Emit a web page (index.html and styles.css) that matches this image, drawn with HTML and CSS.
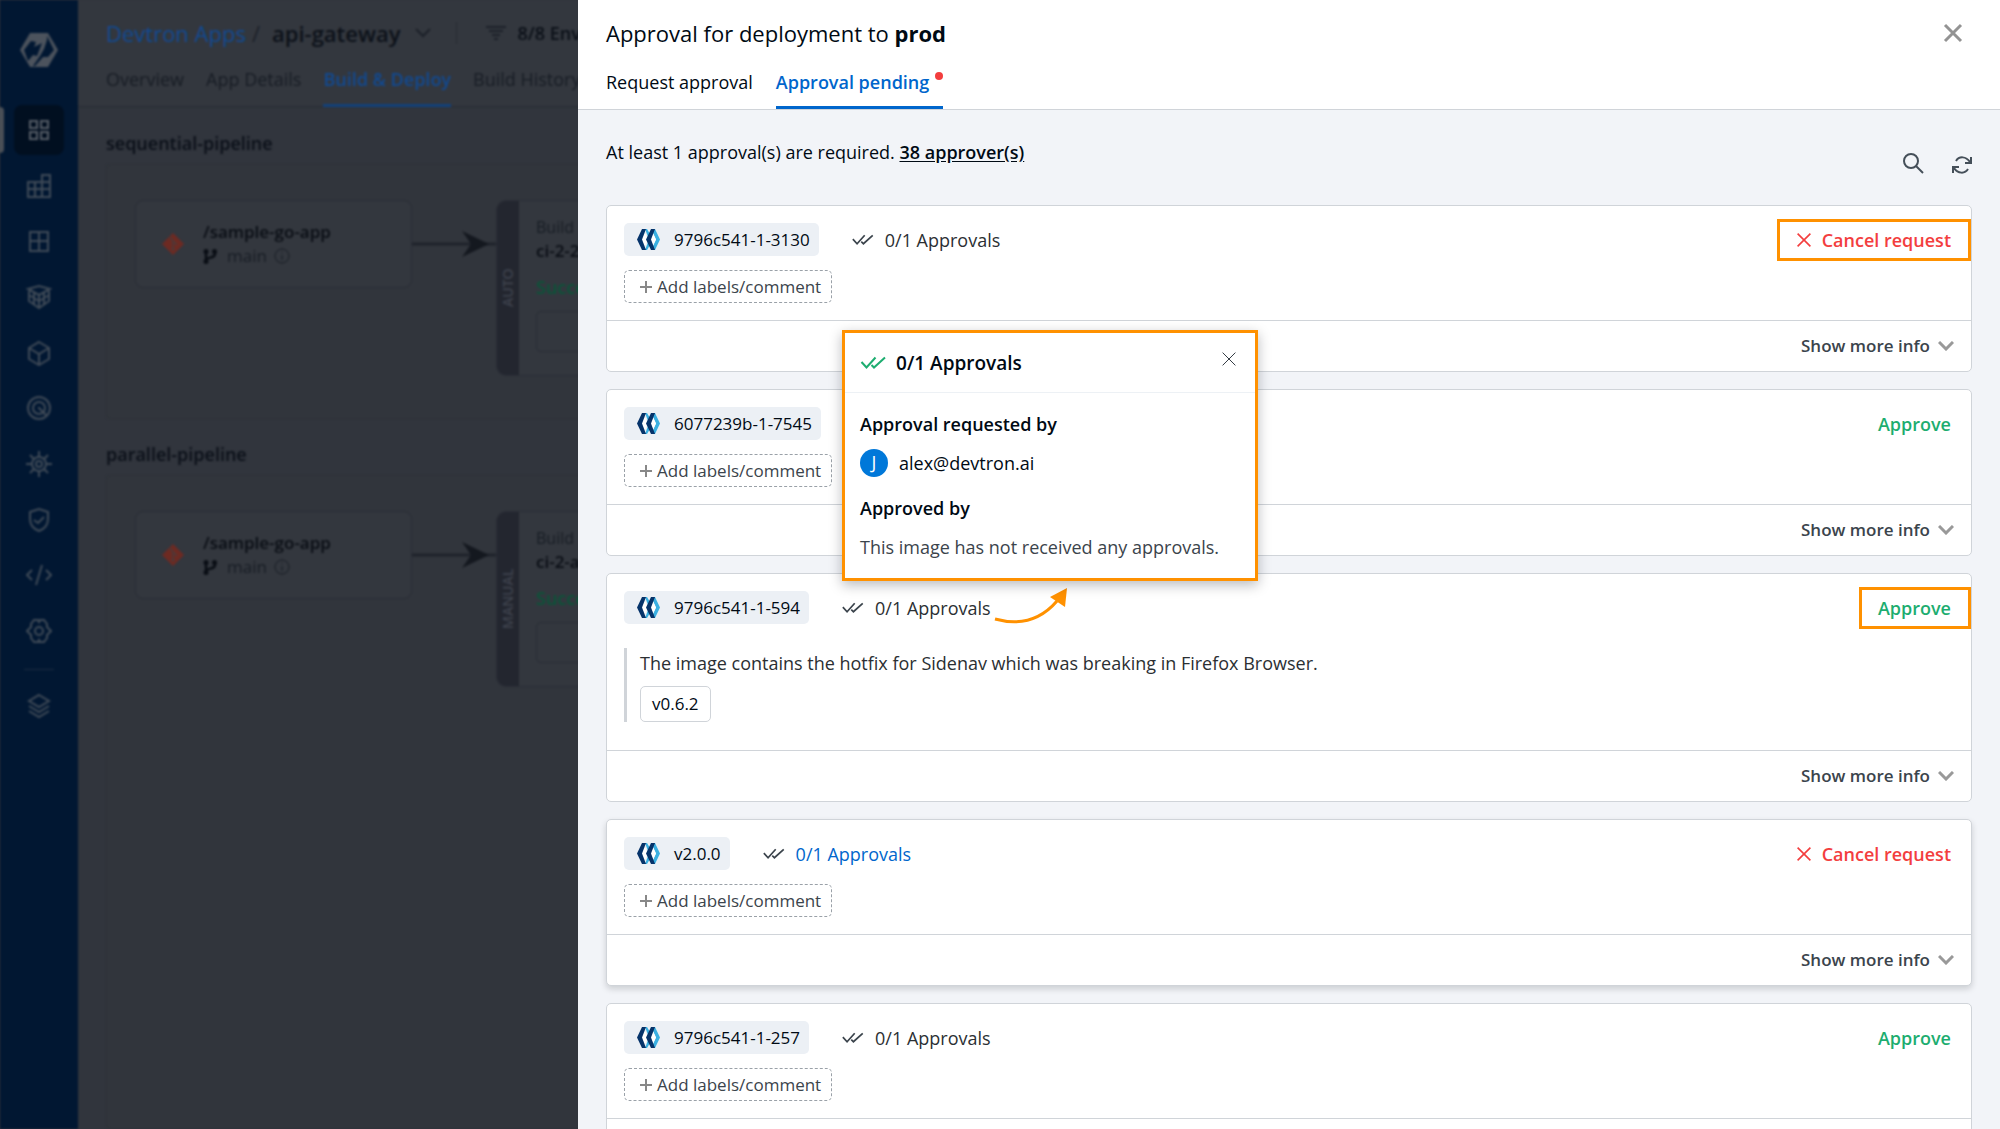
FILE: index.html
```html
<!DOCTYPE html>
<html lang="en">
<head>
<meta charset="utf-8">
<title>Approval for deployment to prod</title>
<link rel="stylesheet" href="styles.css">
</head>
<body>
<svg class="sprite" aria-hidden="true">
  <symbol id="i-close" viewBox="0 0 20 20"><path d="M2 2l16 16M18 2L2 18"/></symbol>
  <symbol id="i-checks" viewBox="0 0 26 13"><path d="M1 6l5 5.500 9-10M11 9l2.500 2.500L24.500 1.500"/></symbol>
  <symbol id="i-chevron" viewBox="0 0 16 10"><path d="M1 1l7 7 7-7"/></symbol>
  <symbol id="i-plus" viewBox="0 0 12 12"><path d="M6 0v12M0 6h12"/></symbol>
  <symbol id="i-ci" viewBox="0 0 23 21">
    <path fill="#3ab0e2" d="M8 0h2l3 5-2 5.500 2 5.500-3 5H8l4-10.500z"/>
    <path fill="#fff" d="M8 4l3 6.500L8 17l-3-6.500z"/>
    <path fill="#3ab0e2" d="M14 0h4l5 10.500L18 21h-4l5-10.500z"/>
    <path fill="#fff" d="M16 4l3 6.500L16 17l-3-6.500z"/>
    <path fill="#06336a" d="M5 0h4L5 10.500 9 21H5L0 10.500z"/>
    <path fill="#06336a" d="M14 0h4l-4 10.500L18 21h-4L9 10.500z"/>
  </symbol>
  <symbol id="i-git" viewBox="0 0 22 22"><path fill="#6d2a22" stroke="none" d="M11 0l11 11-11 11L0 11z"/><path fill="none" stroke="#4a3a3b" stroke-width="1.500" d="M8 4l3 4v8M11 8l4 4"/><circle cx="11" cy="16" r="1.500" fill="#4a3a3b" stroke="none"/></symbol>
  <symbol id="i-branch" viewBox="0 0 14 15"><path fill="none" stroke="#090d14" stroke-width="2.500" d="M3 2v11M12 2v3c0 3-3 3-9 5"/><g fill="#090d14" stroke="none"><circle cx="3" cy="2.500" r="2.500"/><circle cx="3" cy="12.500" r="2.500"/><circle cx="11.500" cy="2.500" r="2.500"/></g></symbol>
  <symbol id="i-info" viewBox="0 0 16 16"><circle cx="8" cy="8" r="7"/><path d="M8 7v5M8 4v1"/></symbol>
  <symbol id="i-link" viewBox="0 0 84 28"><path fill="none" stroke="#1f232b" stroke-width="3" d="M0 14h84"/><path fill="#14181f" d="M50 1l27 13-27 13 9-13z"/></symbol>
</svg>
<div class="layout">
  <div class="backdrop">
    <div class="page">
      <nav class="sidebar" aria-label="Main">
        <a class="logo" href="#" aria-label="Home"><svg viewBox="0 0 38 34"><path fill="#4c535d" d="M10 0h18l10 17-10 17H10L0 17z"/><path fill="#011732" d="M4 17l7-9 5 1-2 5 8-4-5 13-4-1-5 6zM27 3l7 14-6 7-5 0-8 9h-2l7-10 4-7 3-9z"/></svg></a>
        <div class="nav-items">
          <a class="nav-item active" href="#" aria-label="Applications"><svg viewBox="0 0 26 26"><path d="M4 4h7v7H4zM15 4h7v7h-7zM4 15h7v7H4zM15 15h7v7h-7z"/></svg></a>
          <a class="nav-item" href="#" aria-label="Jobs"><svg viewBox="0 0 26 26"><path d="M2 9h22v15H2zM16 9V2h8v7M2 16h22M9 9v15M16 9v15"/></svg></a>
          <a class="nav-item" href="#" aria-label="Application groups"><svg viewBox="0 0 26 26"><path d="M4 4h18v19H4zM13 4v19M4 13h18"/></svg></a>
          <a class="nav-item" href="#" aria-label="Resource browser"><svg viewBox="0 0 26 26"><path d="M2 5l11-3 11 3-11 6zM3 5v12l10 7 10-7V5M3 11l10 6 10-6M13 11v13M8 9v11M18 9v11"/></svg></a>
          <a class="nav-item" href="#" aria-label="Chart store"><svg viewBox="0 0 26 26"><path d="M13 2l10 6v11l-10 6-10-6V8zM3 8l10 6 10-6M13 14v11"/></svg></a>
          <a class="nav-item" href="#" aria-label="Deployment groups"><svg viewBox="0 0 26 26"><circle cx="13" cy="13" r="11"/><circle cx="13" cy="13" r="6"/><path d="M13 13l8 8M13 12v2"/></svg></a>
          <a class="nav-item" href="#" aria-label="Clusters"><svg viewBox="0 0 26 26"><circle cx="13" cy="13" r="7"/><circle cx="13" cy="13" r="3"/><path d="M13 0v6M13 20v6M0 13h6M20 13h6M4 4l4 4M18 18l4 4M22 4l-4 4M8 18l-4 4"/></svg></a>
          <a class="nav-item" href="#" aria-label="Security"><svg viewBox="0 0 26 26"><path d="M4 5l9-3 9 3v7c0 6-4 10-9 12-5-2-9-6-9-12zM8 13l4 3 6-6"/></svg></a>
          <a class="nav-item" href="#" aria-label="Bulk edit"><svg viewBox="0 0 26 26"><path d="M6 8l-5 5 5 5M20 8l5 5-5 5M16 3l-6 20"/></svg></a>
          <a class="nav-item" href="#" aria-label="Global configurations"><svg viewBox="0 0 26 26"><circle cx="13" cy="13" r="4"/><path d="M8 2h4l1 2 1-2h4l3 4 0 3 4 4-4 4 0 3-3 4h-4l-1-2-1 2H8l-3-4 0-3-4-4 4-4 0-3z"/></svg></a>
        </div>
        <hr class="nav-rule">
        <a class="nav-item" href="#" aria-label="Stack manager"><svg viewBox="0 0 26 26"><path d="M13 2l10 6-10 6L3 8zM3 13l10 6 10-6M3 18l10 6 10-6"/></svg></a>
      </nav>
      <main class="workspace">
        <header class="app-header">
          <div class="crumbs">
            <a class="crumb-link" href="#">Devtron Apps</a><span class="slash">/</span><strong class="crumb-app">api-gateway</strong>
            <svg class="crumb-chevron" viewBox="0 0 16 10"><path d="M1 1l7 7 7-7"/></svg>
            <span class="crumb-rule"></span>
            <svg class="filter" viewBox="0 0 20 14"><path d="M0 1h20M3 5h14M6 9h8M8 13h4"/></svg>
            <strong class="envs">8/8 Env</strong>
          </div>
          <nav class="app-tabs" aria-label="Application">
            <a href="#">Overview</a><a href="#">App Details</a><a class="current" href="#">Build &amp; Deploy</a><a href="#">Build History</a>
          </nav>
        </header>
        <section class="pipeline">
          <h2>sequential-pipeline</h2>
          <div class="canvas">
            <div class="source">
              <svg class="git"><use href="#i-git"/></svg>
              <div><strong>/sample-go-app</strong><div class="branch"><svg class="branch-icon"><use href="#i-branch"/></svg>main<svg class="info"><use href="#i-info"/></svg></div></div>
            </div>
            <svg class="link"><use href="#i-link"/></svg>
            <div class="build">
              <div class="mode">AUTO</div>
              <div class="build-body"><span>Build</span><strong>ci-2-2</strong><em>Succeeded</em><div class="slot"></div></div>
            </div>
          </div>
        </section>
        <section class="pipeline">
          <h2>parallel-pipeline</h2>
          <div class="canvas">
            <div class="source">
              <svg class="git"><use href="#i-git"/></svg>
              <div><strong>/sample-go-app</strong><div class="branch"><svg class="branch-icon"><use href="#i-branch"/></svg>main<svg class="info"><use href="#i-info"/></svg></div></div>
            </div>
            <svg class="link"><use href="#i-link"/></svg>
            <div class="build">
              <div class="mode">MANUAL</div>
              <div class="build-body"><span>Build</span><strong>ci-2-a</strong><em>Succeeded</em><div class="slot"></div></div>
            </div>
          </div>
        </section>
      </main>
    </div>
  </div>

  <aside class="drawer">
    <header class="drawer-header">
      <div class="title-row">
        <h1>Approval for deployment to <b>prod</b></h1>
        <button class="close" type="button" aria-label="Close"><svg><use href="#i-close"/></svg></button>
      </div>
      <nav class="tabs" aria-label="Approvals">
        <a href="#">Request approval</a>
        <a class="current" href="#">Approval pending<i class="dot"></i></a>
      </nav>
    </header>
    <div class="drawer-body">
      <div class="toolbar">
        <p>At least 1 approval(s) are required. <a href="#">38 approver(s)</a></p>
        <div class="tools">
          <button type="button" aria-label="Search"><svg viewBox="0 0 22 22"><circle cx="9" cy="9" r="7"/><path d="M14 14l7 7"/></svg></button>
          <button class="refresh" type="button" aria-label="Refresh"><svg viewBox="0 0 20 18"><path d="M4 5c3-5 10-5 14 1M19 1v6h-6M16 13c-3 5-10 5-14-1M1 17v-6h6"/></svg></button>
        </div>
      </div>

      <div class="cards">
        <article class="card">
          <div class="card-top">
            <div class="card-main">
              <div class="image-row">
                <span class="chip"><svg><use href="#i-ci"/></svg>9796c541-1-3130</span>
                <div class="approvals"><button type="button"><svg><use href="#i-checks"/></svg>0/1 Approvals</button></div>
              </div>
              <button class="add" type="button"><svg><use href="#i-plus"/></svg>Add labels/comment</button>
            </div>
            <button class="action cancel marked" type="button"><svg><use href="#i-close"/></svg>Cancel request</button>
          </div>
          <footer><button class="more" type="button">Show more info<svg><use href="#i-chevron"/></svg></button></footer>
        </article>

        <article class="card">
          <div class="card-top">
            <div class="card-main">
              <div class="image-row">
                <span class="chip"><svg><use href="#i-ci"/></svg>6077239b-1-7545</span>
              </div>
              <button class="add" type="button"><svg><use href="#i-plus"/></svg>Add labels/comment</button>
            </div>
            <button class="action approve" type="button">Approve</button>
          </div>
          <footer><button class="more" type="button">Show more info<svg><use href="#i-chevron"/></svg></button></footer>
        </article>

        <article class="card">
          <div class="card-top">
            <div class="card-main">
              <div class="image-row">
                <span class="chip"><svg><use href="#i-ci"/></svg>9796c541-1-594</span>
                <div class="approvals">
                  <button type="button"><svg><use href="#i-checks"/></svg>0/1 Approvals</button>
                  <svg class="pointer" viewBox="0 0 74 38"><path fill="none" stroke="#ff9100" stroke-width="3" d="M1 32c22 6 44 3 62-18"/><path fill="#ff9100" stroke="none" d="M73 1L56 10l15 10z"/></svg>
                  <section class="popover">
                    <header><svg class="popover-checks"><use href="#i-checks"/></svg><h2>0/1 Approvals</h2><button type="button" aria-label="Close"><svg><use href="#i-close"/></svg></button></header>
                    <div class="popover-body">
                      <h3>Approval requested by</h3>
                      <div class="person"><span class="avatar">J</span>alex@devtron.ai</div>
                      <h3>Approved by</h3>
                      <p>This image has not received any approvals.</p>
                    </div>
                  </section>
                </div>
              </div>
              <blockquote class="comment"><p>The image contains the hotfix for Sidenav which was breaking in Firefox Browser.</p><span class="tag">v0.6.2</span></blockquote>
            </div>
            <button class="action approve marked" type="button">Approve</button>
          </div>
          <footer><button class="more" type="button">Show more info<svg><use href="#i-chevron"/></svg></button></footer>
        </article>

        <article class="card raised">
          <div class="card-top">
            <div class="card-main">
              <div class="image-row">
                <span class="chip"><svg><use href="#i-ci"/></svg>v2.0.0</span>
                <div class="approvals hovered"><button type="button"><svg><use href="#i-checks"/></svg>0/1 Approvals</button></div>
              </div>
              <button class="add" type="button"><svg><use href="#i-plus"/></svg>Add labels/comment</button>
            </div>
            <button class="action cancel" type="button"><svg><use href="#i-close"/></svg>Cancel request</button>
          </div>
          <footer><button class="more" type="button">Show more info<svg><use href="#i-chevron"/></svg></button></footer>
        </article>

        <article class="card">
          <div class="card-top">
            <div class="card-main">
              <div class="image-row">
                <span class="chip"><svg><use href="#i-ci"/></svg>9796c541-1-257</span>
                <div class="approvals"><button type="button"><svg><use href="#i-checks"/></svg>0/1 Approvals</button></div>
              </div>
              <button class="add" type="button"><svg><use href="#i-plus"/></svg>Add labels/comment</button>
            </div>
            <button class="action approve" type="button">Approve</button>
          </div>
          <footer><button class="more" type="button">Show more info<svg><use href="#i-chevron"/></svg></button></footer>
        </article>
      </div>
    </div>
  </aside>
</div>
</body>
</html>
```
FILE: styles.css
```css
* { box-sizing: border-box; }
body { margin: 0; font: 18px/24px "Open Sans", "Noto Sans", sans-serif; color: #000a14; }
h1, h2, h3, p, blockquote { margin: 0; }
a { color: inherit; text-decoration: none; }
button { margin: 0; padding: 0; border: 0; background: none; font: inherit; color: inherit; }
svg { display: block; flex: none; fill: none; stroke: currentColor; stroke-width: 2; }
.sprite { position: absolute; width: 0; height: 0; }

.layout { display: grid; grid-template-columns: minmax(0, 289fr) minmax(0, 711fr); height: 100vh; overflow: hidden; }

/* dimmed application page behind the drawer */
.backdrop { overflow: hidden; min-width: 0; background: #31353d; }
.page { display: flex; min-width: 900px; height: 100%; filter: blur(1px); }
.sidebar { flex: none; width: 78px; background: #011732; color: #3f4a57; display: flex; flex-direction: column; align-items: center; padding-top: 33px; }
.logo svg { width: 38px; height: 34px; stroke: none; }
.nav-items { display: flex; flex-direction: column; justify-content: space-between; align-items: center; width: 100%; height: 551px; margin-top: 38px; }
.nav-item { position: relative; display: flex; align-items: center; justify-content: center; width: 50px; height: 50px; border-radius: 8px; }
.nav-item svg { width: 26px; height: 26px; }
.nav-item.active { background: #010f20; color: #555c66; }
.nav-item.active::before { content: ""; position: absolute; left: -16px; top: 2px; width: 6px; height: 46px; border-radius: 0 4px 4px 0; background: #4a4f56; }
.nav-rule { width: 30px; margin: 13px 0 11px; border: 0; border-top: 1px solid #1c2c41; }
.workspace { flex: 1; min-width: 0; display: flex; flex-direction: column; }
.app-header { flex: none; height: 107px; padding: 17px 28px 0; background: #33373e; border-bottom: 1px solid #282c35; }
.crumbs { display: flex; align-items: center; height: 32px; font-size: 22px; }
.crumb-link { color: #114a93; font-weight: 500; }
.slash { margin: 0 12px 0 6px; color: #1c2129; }
.crumb-app { font-weight: 600; color: #0c1119; }
.crumb-chevron { width: 16px; height: 10px; margin: 0 25px 0 15px; color: #1c2129; }
.crumb-rule { width: 1px; height: 22px; background: #262a32; }
.filter { width: 20px; height: 14px; margin: 0 11px 0 29px; color: #1c2129; }
.envs { font-size: 18px; font-weight: 600; color: #0a0f17; }
.app-tabs { display: flex; gap: 22px; margin-top: 18px; color: #171c24; }
.app-tabs a { height: 40px; }
.app-tabs .current { color: #114a93; font-weight: 600; border-bottom: 3px solid #12417a; }
.pipeline { flex: none; display: flex; flex-direction: column; padding: 24px 0 0 28px; }
.pipeline h2 { font-size: 18px; line-height: 24px; font-weight: 600; color: #0a0f18; }
.canvas { display: flex; flex: 1; align-items: flex-start; min-height: 255px; margin-top: 9px; padding: 35px 28px; border: 1px solid #2e3239; background: #31353c; border-radius: 4px; color: #171c24; }
.pipeline:last-child { flex: 1; padding-top: 23px; }
.source { display: flex; align-items: center; flex: none; width: 277px; height: 88px; padding-left: 26px; gap: 19px; border: 1px solid #292d36; border-radius: 8px; background: #33373e; font-size: 17px; }
.source strong, .build strong { display: block; font-size: 17px; font-weight: 600; color: #090d14; }
.git { width: 22px; height: 22px; }
.branch { display: flex; align-items: center; }
.branch-icon { width: 14px; height: 15px; margin-right: 10px; }
.info { width: 16px; height: 16px; margin-left: 7px; stroke-width: 1; }
.link { width: 84px; height: 28px; margin-top: 30px; stroke: none; }
.build { display: flex; flex: none; width: 277px; height: 176px; border: 1px solid #292d36; border-radius: 10px; background: #33373e; overflow: hidden; }
.mode { width: 22px; background: #23262f; color: #3f434e; writing-mode: vertical-rl; transform: rotate(180deg); font-size: 14px; line-height: 22px; font-weight: 600; text-align: center; }
.build-body { flex: 1; padding: 14px 17px; }
.build-body span { display: block; font-size: 16px; }
.build-body em { display: block; margin: 12px 0; font-style: normal; font-weight: 600; color: #0a5539; }
.slot { height: 41px; border: 1px solid #292d36; border-radius: 5px; }

/* approval drawer */
.drawer { display: flex; flex-direction: column; min-width: 0; height: 100vh; background: #f2f4f8; }
.drawer-header { flex: none; padding: 17px 28px 0; background: #fff; border-bottom: 1px solid #d0d4d9; }
.title-row { display: flex; justify-content: space-between; align-items: center; height: 32px; }
h1 { font-size: 22px; line-height: 32px; font-weight: 400; }
h1 b { font-weight: 700; }
.close { margin-right: 9px; color: #939393; }
.close svg { width: 20px; height: 20px; stroke-width: 3; }
.tabs { display: flex; gap: 23px; margin-top: 21px; }
.tabs a { display: flex; padding-bottom: 12px; border-bottom: 3px solid transparent; }
.tabs .current { font-weight: 600; color: #0066cc; border-color: #0066cc; }
.dot { width: 8px; height: 8px; margin: 2px 0 0 6px; border-radius: 50%; background: #f33e3e; }
.drawer-body { flex: 1; min-height: 0; overflow-y: auto; scrollbar-width: none; padding: 30px 28px 18px; }
.toolbar { display: flex; justify-content: space-between; height: 65px; }
.toolbar a { font-weight: 600; text-decoration: underline; text-underline-offset: 2px; }
.tools { display: flex; align-items: flex-start; gap: 28px; padding-top: 12px; color: #454f59; }
.tools svg { width: 22px; height: 22px; }
.tools .refresh { padding-top: 4px; }
.tools .refresh svg { width: 20px; height: 18px; }
.cards { display: flex; flex-direction: column; gap: 17px; }
.card { background: #fff; border: 1px solid #d0d4d9; border-radius: 5px; }
.raised { box-shadow: 0 3px 6px rgba(0, 10, 20, .16); }
.card-top { display: flex; align-items: flex-start; justify-content: space-between; padding: 13px 0 17px 17px; }
.card-main { padding-top: 4px; }
.image-row { display: flex; align-items: center; gap: 33px; }
.chip { display: flex; align-items: center; height: 33px; padding: 0 9px 0 13px; gap: 14px; border-radius: 5px; background: #ecf0f5; font-size: 17px; }
.chip svg { width: 23px; height: 21px; stroke: none; }
.approvals { position: relative; color: #3b444c; }
.approvals > button { display: flex; align-items: center; gap: 11px; height: 33px; color: #2b2f33; }
.approvals > button svg { width: 22px; height: 11px; color: #3b444c; }
.hovered > button { color: #0066cc; }
.add { display: flex; align-items: center; gap: 5px; height: 33px; margin-top: 14px; padding: 0 10px 0 15px; border: 1px dashed #9aa1a8; border-radius: 5px; font-size: 17px; color: #3b444c; }
.add svg { width: 12px; height: 12px; color: #888; }
.action { display: flex; align-items: center; gap: 10px; height: 42px; padding: 0 17px 0 16px; border: 3px solid transparent; font-weight: 600; }
.action svg { width: 16px; height: 16px; }
.cancel { color: #f33e3e; }
.approve { color: #1dad70; }
.marked { border-color: #ff9100; }
.card footer { display: flex; justify-content: flex-end; padding: 0 17px; border-top: 1px solid #d0d4d9; }
.more { display: flex; align-items: center; gap: 8px; height: 50px; font-size: 17px; font-weight: 600; color: #3b444c; }
.more svg { width: 16px; height: 10px; color: #999; stroke-width: 3; }
.comment { margin: 24px 0 11px; padding: 3px 0 0 13px; border-left: 3px solid #d0d4d9; color: #2b2f33; }
.tag { display: inline-block; height: 36px; margin-top: 11px; padding: 0 11px; border: 1px solid #d0d4d9; border-radius: 5px; font-size: 17px; line-height: 34px; color: #000a14; vertical-align: top; }

.pointer { position: absolute; left: 152px; top: -4px; width: 74px; height: 38px; }
.popover { position: absolute; left: 0; bottom: calc(100% + 10px); z-index: 2; width: 416px; background: #fff; border: 3px solid #ff9100; box-shadow: 0 4px 12px rgba(0, 10, 20, .28); color: #000a14; }
.popover header { display: flex; align-items: center; gap: 9px; height: 60px; padding: 0 18px 0 15px; border-bottom: 1px solid #edf1f5; }
.popover h2 { flex: 1; font-size: 19px; font-weight: 600; }
.popover-checks { width: 27px; height: 13px; color: #1dad70; }
.popover header button { padding-bottom: 7px; }
.popover header button svg { width: 16px; height: 16px; stroke-width: 1; }
.popover-body { padding: 19px 15px; }
.popover h3 { font-size: 18px; font-weight: 600; }
.person { display: flex; align-items: center; gap: 11px; margin: 13px 0 19px; }
.avatar { width: 28px; height: 28px; border-radius: 50%; background: #0078d9; color: #fff; line-height: 27px; text-align: center; }
.popover p { margin-top: 15px; color: #3b444c; }
```
